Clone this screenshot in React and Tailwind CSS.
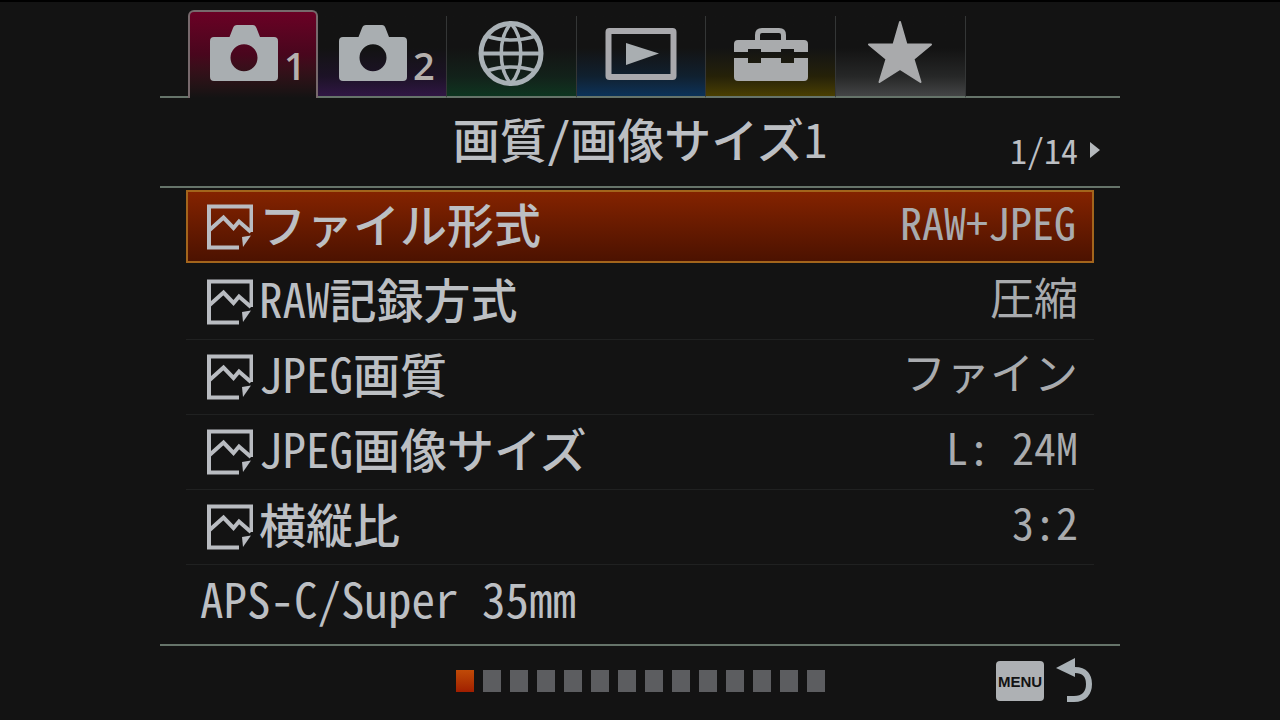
// ============================================================
// App.jsx - camera settings menu
// ============================================================
import React, { useState } from 'react';

// ─── TAB ICONS ───
function CameraIcon() {
  return (
    <svg width="68" height="64" viewBox="0 0 68 64" className="fill-[#a9aeb1] shrink-0" aria-hidden="true">
      <path
        fillRule="evenodd"
        d="M4 17H19.500L23 8Q24 5 27 5H43Q45.500 5 46.500 8L50 17H64Q68 17 68 21V57Q68 61 64 61H4Q0 61 0 57V21Q0 17 4 17ZM34 24.200A13.500 13.500 0 1 0 34 51.200A13.500 13.500 0 1 0 34 24.200Z"
      />
    </svg>
  );
}

function GlobeIcon() {
  return (
    <svg width="76" height="64" viewBox="0 0 76 64" className="fill-none stroke-[#a9b1b6] overflow-visible" strokeWidth="4" aria-hidden="true">
      <circle cx="38" cy="33.500" r="30" strokeWidth="5" />
      <path d="M38 3.500C25 17 25 50 38 63.500C51 50 51 17 38 3.500Z" strokeWidth="3.500" />
      <path d="M8 33.500H68" />
      <path d="M13 16Q38 24 63 16M13 51Q38 43 63 51" strokeWidth="3.500" />
    </svg>
  );
}

function PlaybackIcon() {
  return (
    <svg width="76" height="64" viewBox="0 0 76 64" aria-hidden="true">
      <rect x="5.500" y="11" width="65" height="46" rx="1" className="fill-none stroke-[#a9a9ad]" strokeWidth="6" />
      <path d="M23 23L56 33.500L23 45Z" className="fill-[#a9aeb1]" />
    </svg>
  );
}

function ToolboxIcon() {
  return (
    <svg width="76" height="64" viewBox="0 0 76 64" className="fill-[#a9abad]" aria-hidden="true">
      <path d="M24.500 21V15Q24.500 10.500 29 10.500H46Q50.500 10.500 50.500 15V21" className="fill-none stroke-[#a9abad]" strokeWidth="5" />
      <path d="M5 20H71Q75 20 75 24V32H61V29H48V32H28V29H15V32H1V24Q1 20 5 20Z" />
      <path d="M1 38H15V43H28V38H48V43H61V38H75V57Q75 61 71 61H5Q1 61 1 57Z" />
    </svg>
  );
}

function StarIcon() {
  return (
    <svg width="76" height="64" viewBox="0 0 76 64" className="fill-[#a9aaac] stroke-[#a9aaac]" strokeWidth="2" strokeLinejoin="round" aria-hidden="true">
      <path d="M38 2L44.500 24.500H69L51.500 39L58.500 62L38 49L17.500 62L24.500 39L7 24.500H31.500Z" />
    </svg>
  );
}

// ─── ROW / FOOTER ICONS ───
function StillImageIcon() {
  return (
    <svg width="46" height="46" viewBox="0 0 46 46" className="fill-none stroke-[#b9bcc1] shrink-0" aria-hidden="true">
      <path d="M44.500 28V2.500H2V43.500H32" strokeWidth="4" />
      <path d="M2 26.500L16.500 13.500L26.500 24L32 17.500L44 28" strokeWidth="4" />
      <path d="M35 33L44 31.500L36 43Z" className="fill-[#b9bcc1] stroke-none" />
    </svg>
  );
}

function ReturnIcon() {
  return (
    <svg width="38" height="46" viewBox="0 0 38 46" aria-hidden="true">
      <path d="M17 12H19C29 12 33 18 33 26C33 35 28 41 18 41H11" className="fill-none stroke-[#a9b1b6]" strokeWidth="6" />
      <path d="M0 10L19 0V19Z" className="fill-[#a9b1b6]" />
    </svg>
  );
}

const TABS = [
  { id: 'shoot1', label: '撮影設定1', icon: CameraIcon, number: '1', shade: 'from-[#1d0a28] via-[#1a1020]' },
  { id: 'shoot2', label: '撮影設定2', icon: CameraIcon, number: '2', shade: 'from-[#301644] via-[#1c1226]' },
  { id: 'network', label: 'ネットワーク', icon: GlobeIcon, shade: 'from-[#0d3520] via-[#12211a]' },
  { id: 'playback', label: '再生', icon: PlaybackIcon, shade: 'from-[#0b3259] via-[#10202f]' },
  { id: 'setup', label: 'セットアップ', icon: ToolboxIcon, shade: 'from-[#4a3f00] via-[#252108]' },
  { id: 'mymenu', label: 'マイメニュー', icon: StarIcon, shade: 'from-[#444546] via-[#262727]' },
];

// prefix = latin part of the name, drawn one weight lighter than the kanji/kana
const SETTINGS = [
  { id: 'format', prefix: '', name: 'ファイル形式', value: 'RAW+JPEG', still: true },
  { id: 'raw', prefix: 'RAW', name: '記録方式', value: '圧縮', still: true },
  { id: 'quality', prefix: 'JPEG', name: '画質', value: 'ファイン', still: true },
  { id: 'size', prefix: 'JPEG', name: '画像サイズ', value: 'L: 24M', still: true },
  { id: 'aspect', prefix: '', name: '横縦比', value: '3:2', still: true },
  { id: 'apsc', prefix: 'APS-C/Super 35mm', name: '', value: '', still: false },
];

const PAGE_COUNT = 14;

function MenuTab({ tab, active, onSelect }) {
  const Icon = tab.icon;

  return (
    <button
      role="tab"
      aria-selected={active}
      aria-label={tab.label}
      onClick={onSelect}
      className={`flex items-start justify-center gap-1.5 ${tab.number ? 'pl-2.5' : ''} ${
        active
          ? 'pt-2 border-x-2 border-t-2 border-[#77696c] rounded-t-md bg-linear-to-b from-[#6b0025] via-[#48061d] to-[#131313]'
          : `mt-1.5 pt-1 border-b-2 border-b-[#66746a] border-r border-r-[#343636] bg-linear-to-t ${tab.shade} via-25% to-[#131313] to-60%`
      }`}
    >
      <Icon />
      {tab.number && (
        <span className="pt-[26px] font-['Open_Sans',sans-serif] text-[38px] leading-[38px] font-semibold text-[#b5b0ad]">{tab.number}</span>
      )}
    </button>
  );
}

function SettingRow({ item, selected, onSelect }) {
  return (
    <li className={selected ? '' : 'border-b border-[#202121] last:border-transparent'}>
      <button
        onClick={onSelect}
        className={`w-full flex items-center justify-between pr-4 ${
          selected
            ? 'h-[73px] mb-0.5 pl-3 border-2 border-[#a3651c] bg-linear-to-b from-[#842300] to-[#4c1200]'
            : 'h-[74px] pl-3.5'
        }`}
      >
        <span className="flex items-center gap-1.5">
          {item.still && <span className="pl-[7px]"><StillImageIcon /></span>}
          <span className="pb-2 text-[47px] leading-[60px] font-medium whitespace-pre">
            {item.prefix && <span className="font-normal">{item.prefix}</span>}
            {item.name}
          </span>
        </span>
        <span className="pb-3 text-[44px] leading-[60px] whitespace-pre text-[#a9abae]">{item.value}</span>
      </button>
    </li>
  );
}

export default function App() {
  const [activeTab, setActiveTab] = useState('shoot1');
  const [selected, setSelected] = useState('format');
  const [page, setPage] = useState(1);

  return (
    <div className="min-h-screen bg-[#131313] border-t-2 border-black text-[#bcbfc3] font-['Noto_Sans_CJK_JP',sans-serif] [font-feature-settings:'hwid']">
      <main className="w-3/4 mx-auto">
        {/* ─── TABS ─── */}
        <div className="flex h-24 pt-2">
          <div className="w-7 border-b-2 border-[#66746a]" />
          <div role="tablist" className="w-[81%] grid grid-cols-6">
            {TABS.map((tab) => (
              <MenuTab key={tab.id} tab={tab} active={tab.id === activeTab} onSelect={() => setActiveTab(tab.id)} />
            ))}
          </div>
          <div className="flex-1 border-b-2 border-[#66746a]" />
        </div>

        {/* ─── PAGE TITLE ─── */}
        <header className="h-[90px] grid grid-cols-[1fr_auto_1fr] items-center border-b-2 border-[#66746a]">
          <h1 className="col-start-2 pb-2 text-[47px] leading-[60px] font-medium">
            画質/画像サイズ<span className="font-normal">1</span>
          </h1>
          <div className="flex items-center justify-end gap-3 pt-4 pr-5">
            <span className="text-[34px] leading-[40px]">{page}/{PAGE_COUNT}</span>
            <button aria-label="次のページ" onClick={() => setPage(page < PAGE_COUNT ? page + 1 : 1)}>
              <svg width="10" height="16" viewBox="0 0 10 16" className="fill-[#b4b8bb]" aria-hidden="true">
                <path d="M0 0L10 8L0 16Z" />
              </svg>
            </button>
          </div>
        </header>

        {/* ─── SETTINGS ─── */}
        <ul className="px-[26px] pt-0.5 pb-1 border-b-2 border-[#66746a]">
          {SETTINGS.map((item) => (
            <SettingRow key={item.id} item={item} selected={item.id === selected} onSelect={() => setSelected(item.id)} />
          ))}
        </ul>

        {/* ─── FOOTER ─── */}
        <footer className="grid grid-cols-[1fr_auto_1fr] items-center pt-3">
          <nav aria-label="ページ" className="col-start-2 flex gap-[9px]">
            {Array.from({ length: PAGE_COUNT }, (_, i) => (
              <button
                key={i}
                aria-label={`${i + 1}ページ`}
                onClick={() => setPage(i + 1)}
                className={`w-[18px] h-[22px] ${i + 1 === page ? 'bg-linear-to-b from-[#c04a08] to-[#a01e00]' : 'bg-[#5c5d60]'}`}
              />
            ))}
          </nav>
          <button className="justify-self-end flex items-center gap-3 pr-[26px]">
            <span className="w-12 h-10 flex items-center justify-center rounded bg-[#aeb1b4] font-['Liberation_Sans',sans-serif] text-[15px] leading-none font-bold text-[#131313]">MENU</span>
            <ReturnIcon />
          </button>
        </footer>
      </main>
    </div>
  );
}
